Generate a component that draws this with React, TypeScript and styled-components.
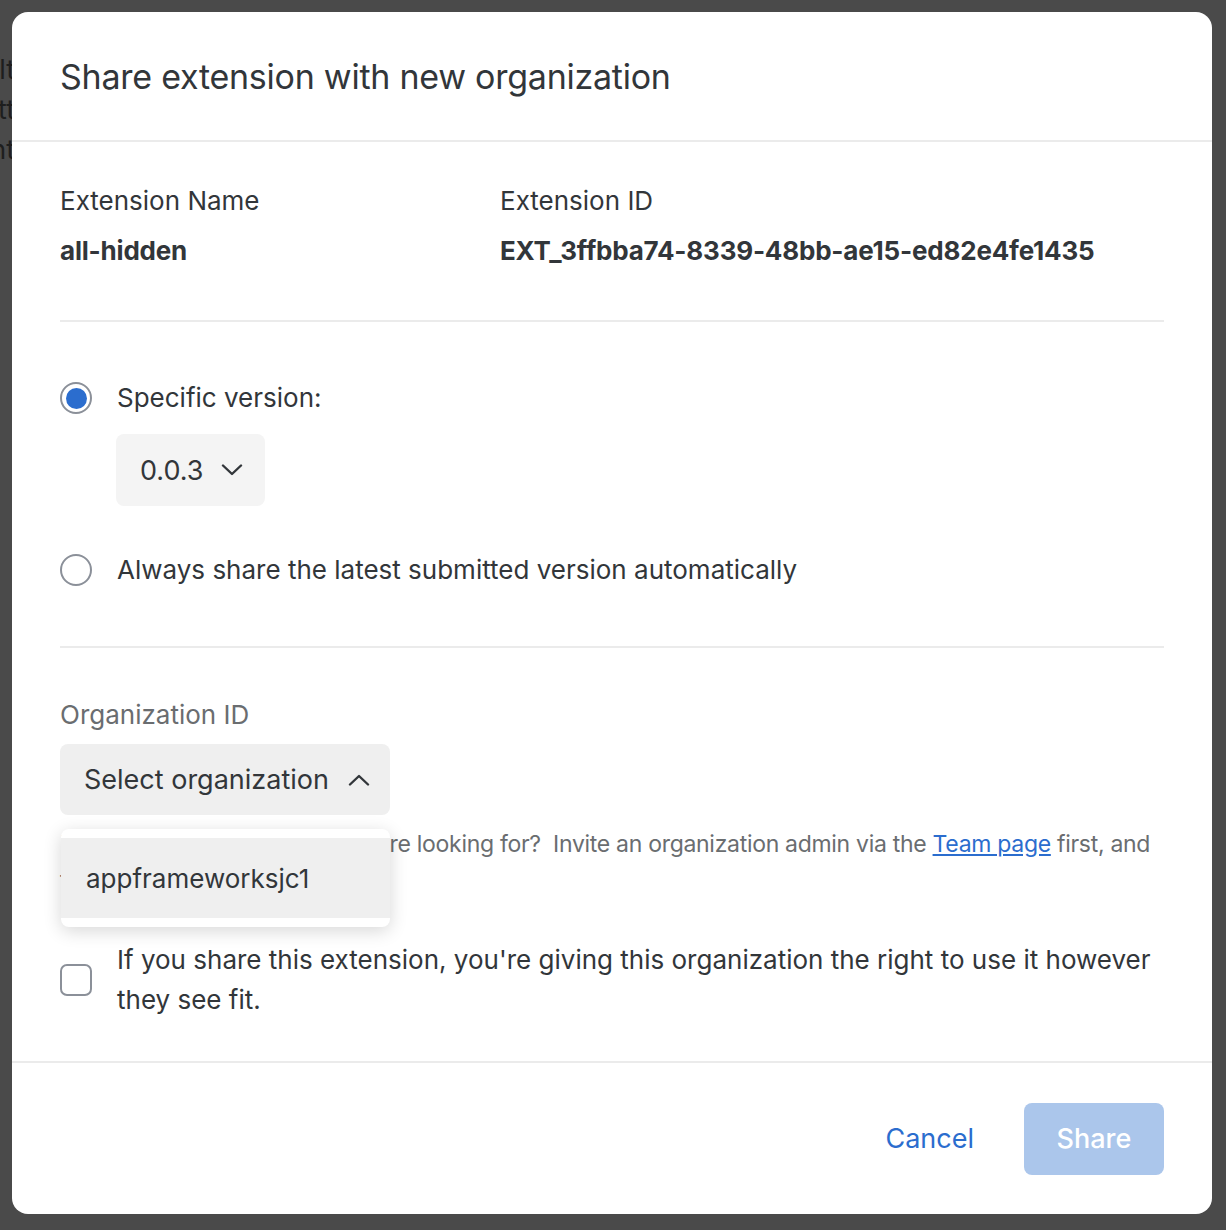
import styled, { createGlobalStyle } from "styled-components"

const GlobalStyle = createGlobalStyle`
    body {
        margin: 0;
        background: #4a4a4a;
        font-family: Inter, "Noto Sans", "Liberation Sans", sans-serif;
        color: #32363a;
    }
`

const Chevron = ({ up }: { up?: boolean }) => (
    <svg width="22" height="12" viewBox="0 0 22 12" fill="none">
        <path
            d={up ? "M2 10.5 L11 2 L20 10.5" : "M2 1.5 L11 10 L20 1.5"}
            stroke="#32363a"
            strokeWidth="2.4"
            strokeLinecap="round"
            strokeLinejoin="round"
        />
    </svg>
)

const App = () => {
    return (
        <Page>
            <GlobalStyle />
            <Backdrop>
                <BackdropLine>Default</BackdropLine>
                <BackdropLine>Scott</BackdropLine>
                <BackdropLine>Content</BackdropLine>
            </Backdrop>
            <Modal>
                <Header>
                    <Title>Share extension with new organization</Title>
                </Header>
                <Body>
                    <InfoSection>
                        <Label>Extension Name</Label>
                        <Label>Extension ID</Label>
                        <Value>all-hidden</Value>
                        <Value>EXT_3ffbba74-8339-48bb-ae15-ed82e4fe1435</Value>
                    </InfoSection>

                    <VersionSection>
                        <RadioRow>
                            <Radio $checked />
                            <RadioLabel>Specific version:</RadioLabel>
                        </RadioRow>
                        <VersionSelect>
                            <span>0.0.3</span>
                            <Chevron />
                        </VersionSelect>
                        <RadioRow>
                            <Radio />
                            <RadioLabel>Always share the latest submitted version automatically</RadioLabel>
                        </RadioRow>
                    </VersionSection>

                    <OrgSection>
                        <FieldLabel>Organization ID</FieldLabel>
                        <SelectWrap>
                            <OrgSelect>
                                <span>Select organization</span>
                                <Chevron up />
                            </OrgSelect>
                            <Menu>
                                <MenuItem>appframeworksjc1</MenuItem>
                            </Menu>
                        </SelectWrap>
                        <Helper>
                            Don't see the organization you're looking for?&nbsp; Invite an organization admin via the{" "}
                            <HelperLink href="#">Team page</HelperLink> first, and then try again.
                        </Helper>
                        <CheckRow>
                            <Checkbox />
                            <CheckLabel>
                                If you share this extension, you're giving this organization the right to use it however they see fit.
                            </CheckLabel>
                        </CheckRow>
                    </OrgSection>
                </Body>
                <Footer>
                    <CancelButton>Cancel</CancelButton>
                    <ShareButton disabled>Share</ShareButton>
                </Footer>
            </Modal>
        </Page>
    )
}

const Page = styled.div`
    display: grid;
    grid-template-columns: 12px 1200px;
    padding: 12px 0 16px;
    min-height: 1230px;
    box-sizing: border-box;
`

const Backdrop = styled.div`
    overflow: hidden;
    padding-top: 38px;
    display: flex;
    flex-direction: column;
    align-items: flex-end;
`

const BackdropLine = styled.div`
    font-size: 27px;
    line-height: 40px;
    color: #1e1e1e;
    white-space: nowrap;
    margin-right: -3px;
`

const Modal = styled.div`
    background: #fff;
    border-radius: 16px;
    height: 1202px;
    display: flex;
    flex-direction: column;
`

const Header = styled.div`
    height: 128px;
    display: flex;
    align-items: center;
    padding: 0 48px;
    border-bottom: 2px solid #ebebeb;
`

const Title = styled.h1`
    margin: 0;
    font-size: 34px;
    font-weight: 400;
    color: #32363a;
    letter-spacing: -0.25px;
`

const Body = styled.div`
    flex: 1;
    padding: 0 48px;
    display: flex;
    flex-direction: column;
`

const InfoSection = styled.div`
    display: grid;
    grid-template-columns: 440px 1fr;
    row-gap: 10px;
    padding: 39px 0 49px;
    border-bottom: 2px solid #ebebeb;
`

const Label = styled.div`
    font-size: 26px;
    line-height: 40px;
`

const Value = styled.div`
    font-size: 26px;
    line-height: 40px;
    font-weight: 700;
    letter-spacing: -0.2px;
`

const VersionSection = styled.div`
    display: flex;
    flex-direction: column;
    align-items: flex-start;
    padding: 56px 0 56px;
    border-bottom: 2px solid #ebebeb;
`

const RadioRow = styled.label`
    display: flex;
    align-items: center;
    gap: 25px;
`

const Radio = styled.span<{ $checked?: boolean }>`
    width: 32px;
    height: 32px;
    box-sizing: border-box;
    border-radius: 50%;
    border: 2px solid #8b9099;
    display: flex;
    align-items: center;
    justify-content: center;
    &::after {
        content: "";
        width: 21px;
        height: 21px;
        border-radius: 50%;
        background: ${p => (p.$checked ? "#2b6dce" : "transparent")};
    }
`

const RadioLabel = styled.span`
    font-size: 26px;
    line-height: 40px;
`

const VersionSelect = styled.div`
    margin: 16px 0 44px 56px;
    height: 72px;
    box-sizing: border-box;
    display: flex;
    align-items: center;
    gap: 17px;
    padding: 0 22px 0 24px;
    background: #f4f4f4;
    border-radius: 8px;
    font-size: 27px;
`

const OrgSection = styled.div`
    flex: 1;
    padding: 47px 0 0;
    display: flex;
    flex-direction: column;
    align-items: flex-start;
`

const FieldLabel = styled.div`
    font-size: 26px;
    line-height: 40px;
    color: #6a6d70;
`

const SelectWrap = styled.div`
    position: relative;
    margin-top: 9px;
`

const OrgSelect = styled.div`
    width: 330px;
    height: 71px;
    box-sizing: border-box;
    display: flex;
    align-items: center;
    justify-content: space-between;
    padding: 0 20px 0 24px;
    background: #efefef;
    border-radius: 8px;
    font-size: 27px;
    color: #32363a;
`

const Menu = styled.div`
    position: absolute;
    top: 85px;
    left: 1px;
    width: 329px;
    padding: 9px 0;
    background: #fff;
    border-radius: 8px;
    box-shadow: 0 4px 18px rgba(0, 0, 0, 0.16);
    z-index: 2;
`

const MenuItem = styled.div`
    height: 80px;
    display: flex;
    align-items: center;
    padding-left: 25px;
    background: #efefef;
    font-size: 26px;
`

const Helper = styled.p`
    margin: 11px 0 0;
    font-size: 23px;
    line-height: 36px;
    color: #6a6d70;
    letter-spacing: -0.3px;
`

const HelperLink = styled.a`
    color: #2b6dce;
    text-decoration: underline;
`

const CheckRow = styled.label`
    margin-top: 42px;
    display: flex;
    align-items: center;
    gap: 25px;
`

const Checkbox = styled.span`
    flex: none;
    width: 32px;
    height: 32px;
    box-sizing: border-box;
    border: 2px solid #8b9099;
    border-radius: 7px;
`

const CheckLabel = styled.span`
    font-size: 26px;
    line-height: 40px;
`

const Footer = styled.div`
    height: 153px;
    box-sizing: border-box;
    border-top: 2px solid #ebebeb;
    padding: 0 48px;
    display: flex;
    align-items: center;
    justify-content: flex-end;
    gap: 50px;
`

const CancelButton = styled.button`
    border: none;
    background: none;
    padding: 0;
    font-family: inherit;
    font-size: 27px;
    color: #2b6dce;
`

const ShareButton = styled.button`
    width: 140px;
    height: 72px;
    border: none;
    border-radius: 8px;
    background: #abc6eb;
    color: #fff;
    font-family: inherit;
    font-size: 27px;
    font-weight: 500;
`

export default App
